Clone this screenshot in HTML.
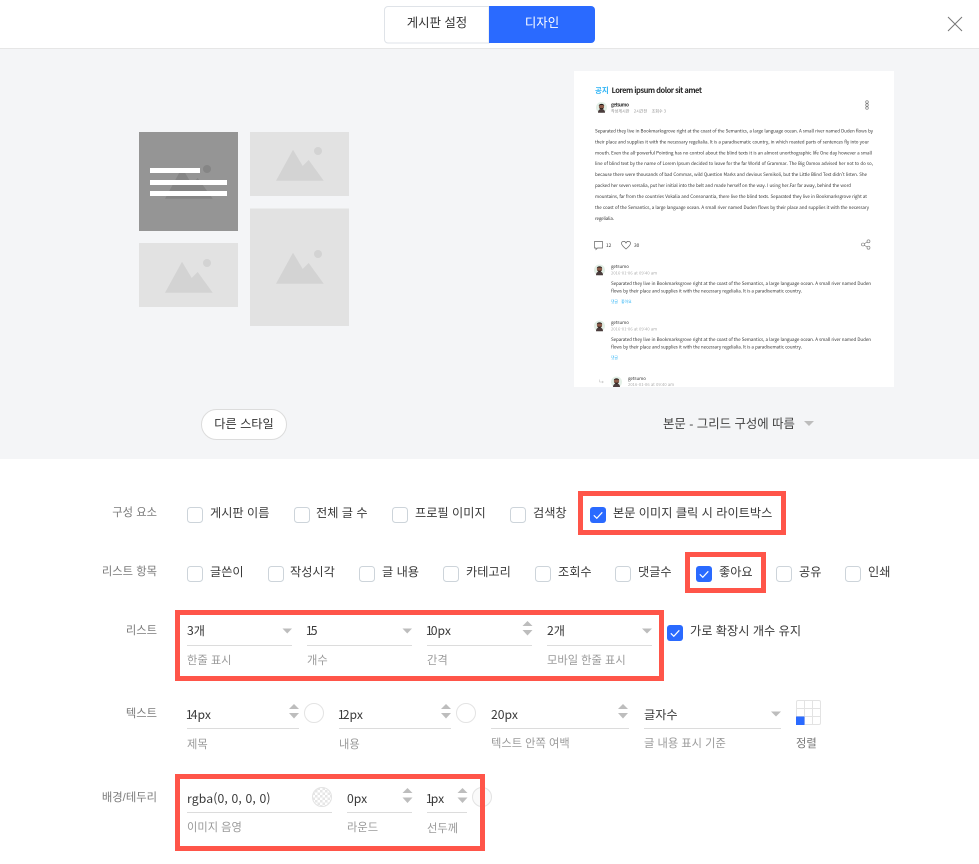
<!DOCTYPE html>
<html lang="ko"><head><meta charset="utf-8"><title>디자인</title>
<style>
html,body{margin:0;padding:0;background:#fff}
body{position:relative;width:979px;height:864px;overflow:hidden;font-family:"Liberation Sans","Noto Sans CJK KR",sans-serif;color:#333}
svg{position:absolute;left:0;top:0}
.t{position:absolute;white-space:nowrap;line-height:20px;font-size:12.2px;color:#3a3a3a}
.l{position:absolute;white-space:nowrap;line-height:20px;font-size:11.3px;color:#7a7a7a;right:822px}
.s{position:absolute;white-space:nowrap;line-height:20px;font-size:11.25px;color:#9a9a9a}
.v{position:absolute;white-space:nowrap;line-height:20px;font-size:12.2px;color:#3a3a3a;font-family:"Noto Sans CJK KR","Liberation Sans",sans-serif}
.n{margin-left:-1.2px;letter-spacing:-1.8px}
.c{position:absolute;text-align:center;line-height:20px;font-size:12.4px}
.pv{font-family:"Noto Sans CJK KR","Liberation Sans",sans-serif;fill:#3a3a3a;font-size:4.5px}
.red{position:absolute;border:5px solid #ff5549;box-sizing:border-box}
</style></head><body>
<svg width="979" height="864" viewBox="0 0 979 864">
<defs>
<pattern id="ck" width="5" height="5" patternUnits="userSpaceOnUse"><rect width="5" height="5" fill="#fff"/><rect width="2.500" height="2.500" fill="#e6e6e6"/><rect x="2.500" y="2.500" width="2.500" height="2.500" fill="#e6e6e6"/></pattern>
<g id="mt"><path d="M43 29.700L52.700 46 58.700 40 73.700 60.700H26Z"/><circle cx="68" cy="31" r="4"/></g>
<g id="av"><circle cx="0" cy="0" r="5.500" fill="#e3efe6"/><path d="M-3.500 5.200C-3.500 2.500-2 1.500 0 1.500S3.500 2.500 3.500 5.200Z" fill="#4a3c3c"/><circle cx="0" cy="-.8" r="2.600" fill="#8a5a48"/><path d="M-2.700-1.500C-2.700-4.300 2.700-4.300 2.700-1.500L1.500-2.500H-1.500Z" fill="#221a18"/><path d="M-2.300.2C-1.500 2.500 1.500 2.500 2.300.2L0 .8Z" fill="#2a1f1c"/></g>
<g id="up"><path d="M-5 5L0 0 5 5Z" fill="#bdbdbd"/></g>
<g id="dn"><path d="M-5 0L0 5.500 5 0Z" fill="#bdbdbd"/></g>
<g id="cb"><rect x=".5" y=".5" width="15" height="15" rx="3" fill="#fff" stroke="#cdd4da"/></g>
<g id="cc"><rect width="16" height="16" rx="3" fill="#2a6aff"/><path d="M3.800 8.300L6.800 11.300 12.300 5.300" fill="none" stroke="#fff" stroke-width="1.200"/></g>
</defs>
<!-- header -->
<rect y="48" width="979" height="1" fill="#e6e6e6"/>
<path d="M489 6.500H388a3.500 3.500 0 0 0-3.500 3.500V39.500a3.500 3.500 0 0 0 3.500 3.500H489Z" fill="#fff" stroke="#dfe3e8"/>
<path d="M489 6H591a4 4 0 0 1 4 4V39a4 4 0 0 1-4 4H489Z" fill="#2a6aff"/>
<path d="M948 17L962 31M962 17L948 31" stroke="#777" stroke-width="1" fill="none"/>
<!-- preview bg -->
<rect y="49" width="979" height="410" fill="#f4f5f7"/>
<!-- tiles -->
<rect x="139" y="132" width="99" height="99" fill="#959595"/>
<use href="#mt" x="139" y="138" fill="#858585"/>
<rect x="150" y="168" width="50" height="5" fill="#fff"/><rect x="150" y="180" width="77" height="5" fill="#fff"/><rect x="150" y="191" width="77" height="5" fill="#fff"/>
<rect x="250" y="132" width="99" height="64" fill="#e2e2e2"/>
<use href="#mt" x="250" y="120" fill="#d3d3d3"/>
<rect x="139" y="243" width="99" height="64" fill="#e2e2e2"/>
<use href="#mt" x="139" y="232" fill="#d3d3d3"/>
<rect x="250" y="208.500" width="99" height="117.500" fill="#e2e2e2"/>
<use href="#mt" x="250" y="223" fill="#d3d3d3"/>
<!-- preview card -->
<rect x="574" y="71" width="320" height="316" fill="#fff"/>
<g style="filter:blur(.25px)">
<text x="595" y="93" style="font-family:'Noto Sans CJK KR',sans-serif;font-size:7.500px;font-weight:700" fill="#2fb4f5">공지</text>
<text x="611.500" y="93" textLength="90.500" style="font-family:'Noto Sans CJK KR',sans-serif;font-size:7.500px;font-weight:700" fill="#2a2a2a">Lorem ipsum dolor sit amet</text>
<use href="#av" x="601.500" y="107.500"/>
<text class="pv" x="611" y="106.500" textLength="18" style="font-size:4.800px;font-weight:700;fill:#333">getsumo</text>
<text class="pv" x="611" y="112.500" style="fill:#888;font-size:4px">작성게시판 &#160;&#160; 2시간전 &#160;&#160; 조회수 3</text>
<circle cx="867" cy="102" r="1.300" fill="none" stroke="#777" stroke-width=".7"/><circle cx="867" cy="105" r="1.300" fill="none" stroke="#777" stroke-width=".7"/><circle cx="867" cy="108" r="1.300" fill="none" stroke="#777" stroke-width=".7"/>
<text class="pv" x="595" y="132.500" textLength="278">Separated they live in Bookmarksgrove right at the coast of the Semantics, a large language ocean. A small river named Duden flows by</text>
<text class="pv" x="595" y="143.500" textLength="274">their place and supplies it with the necessary regelialia. It is a paradisematic country, in which roasted parts of sentences fly into your</text>
<text class="pv" x="595" y="154.500" textLength="277">mouth. Even the all-powerful Pointing has no control about the blind texts it is an almost unorthographic life One day however a small</text>
<text class="pv" x="595" y="165" textLength="278">line of blind text by the name of Lorem Ipsum decided to leave for the far World of Grammar. The Big Oxmox advised her not to do so,</text>
<text class="pv" x="595" y="176" textLength="272">because there were thousands of bad Commas, wild Question Marks and devious Semikoli, but the Little Blind Text didn't listen. She</text>
<text class="pv" x="595" y="187" textLength="256">packed her seven versalia, put her initial into the belt and made herself on the way. I using her.Far far away, behind the word</text>
<text class="pv" x="595" y="197.800" textLength="272">mountains, far from the countries Vokalia and Consonantia, there live the blind texts. Separated they live in Bookmarksgrove right at</text>
<text class="pv" x="595" y="208.800" textLength="274">the coast of the Semantics, a large language ocean. A small river named Duden flows by their place and supplies it with the necessary</text>
<text class="pv" x="595" y="219.800" textLength="19">regelialia.</text>
<path d="M594.500 241.500H602.500V248H597.500L596 249.500V248H594.500Z" fill="none" stroke="#666" stroke-width=".7"/>
<text class="pv" x="606" y="247" style="font-size:4.800px">12</text>
<path d="M626 249C623 246.500 621.500 245 621.500 243.500C621.500 241 625 240.500 626 243C627 240.500 630.500 241 630.500 243.500C630.500 245 629 246.500 626 249Z" fill="none" stroke="#666" stroke-width=".7"/>
<text class="pv" x="634" y="247" style="font-size:4.800px">30</text>
<path d="M863 244.500L868 241.500M863 244.500L868 247.500" stroke="#777" stroke-width=".6"/><circle cx="863" cy="244.500" r="1.500" fill="#fff" stroke="#777" stroke-width=".6"/><circle cx="868.500" cy="241.300" r="1.500" fill="#fff" stroke="#777" stroke-width=".6"/><circle cx="868.500" cy="247.700" r="1.500" fill="#fff" stroke="#777" stroke-width=".6"/>
<use href="#av" x="599.500" y="270"/>
<text class="pv" x="611" y="268" textLength="18" style="font-size:4.500px">getsumo</text>
<text class="pv" x="611" y="274.500" textLength="46" style="fill:#aaa;font-size:4px">2016-01-06 at 09:40 am</text>
<text class="pv" x="611" y="285" textLength="260">Separated they live in Bookmarksgrove right at the coast of the Semantics, a large language ocean. A small river named Duden</text>
<text class="pv" x="611" y="292.400" textLength="191">flows by their place and supplies it with the necessary regelialia. It is a paradisematic country.</text>
<text class="pv" x="611" y="303" style="fill:#2fb4f5;font-size:3.800px">댓글 &#160; 좋아요</text>
<use href="#av" x="599.500" y="326"/>
<text class="pv" x="611" y="324" textLength="18" style="font-size:4.500px">getsumo</text>
<text class="pv" x="611" y="330.500" textLength="46" style="fill:#aaa;font-size:4px">2016-01-06 at 09:40 am</text>
<text class="pv" x="611" y="341" textLength="260">Separated they live in Bookmarksgrove right at the coast of the Semantics, a large language ocean. A small river named Duden</text>
<text class="pv" x="611" y="348.400" textLength="191">flows by their place and supplies it with the necessary regelialia. It is a paradisematic country.</text>
<text class="pv" x="611" y="359" style="fill:#2fb4f5;font-size:3.800px">댓글</text>
<path d="M599.500 379.500V382H603M602 381L603.500 382 602 383" fill="none" stroke="#bbb" stroke-width=".5"/>
<use href="#av" x="616.500" y="382"/>
<text class="pv" x="628" y="380" textLength="18" style="font-size:4.500px">getsumo</text>
<text class="pv" x="628" y="386" textLength="46" style="fill:#aaa;font-size:4px">2016-01-06 at 09:40 am</text>
</g>
<rect x="574" y="387" width="320" height="8" fill="#f4f5f7"/>
<!-- buttons -->
<rect x="201.500" y="409.500" width="85" height="30" rx="15" fill="#fff" stroke="#dcdcdc"/>
<path d="M804 421H814L809 426Z" fill="#bdbdbd"/>
<!-- row 1 checks -->
<use href="#cb" x="187" y="507"/><use href="#cb" x="294" y="507"/><use href="#cb" x="392" y="507"/><use href="#cb" x="510" y="507"/><use href="#cc" x="590" y="507"/>
<!-- row 2 checks -->
<use href="#cb" x="187" y="566"/><use href="#cb" x="268" y="566"/><use href="#cb" x="359" y="566"/><use href="#cb" x="443" y="566"/><use href="#cb" x="535" y="566"/><use href="#cb" x="615" y="566"/><use href="#cc" x="696" y="566"/><use href="#cb" x="776" y="566"/><use href="#cb" x="845" y="566"/>
<use href="#cc" x="667" y="625"/>
<!-- underlines -->
<g fill="#dcdcdc">
<rect x="187" y="645" width="105" height="1"/><rect x="307" y="645" width="105" height="1"/><rect x="427" y="645" width="105" height="1"/><rect x="547" y="645" width="105" height="1"/>
<rect x="187" y="728" width="112" height="1"/><rect x="339" y="728" width="112" height="1"/><rect x="491" y="728" width="138" height="1"/><rect x="644" y="728" width="137" height="1"/>
<rect x="187" y="812" width="145" height="1"/><rect x="347" y="812" width="65" height="1"/><rect x="427" y="812" width="40" height="1"/>
</g>
<!-- arrows -->
<g fill="#bdbdbd">
<path d="M282.500 628.500H292L287.250 633.500Z"/><path d="M402.500 628.500H412L407.250 633.500Z"/><path d="M642 628.500H652L647 633.500Z"/><path d="M771 711.500H781L776 716.500Z"/>
</g>
<use href="#up" x="527.500" y="621"/><use href="#dn" x="527.500" y="630"/>
<use href="#up" x="294" y="704"/><use href="#dn" x="294" y="713"/>
<use href="#up" x="446" y="704"/><use href="#dn" x="446" y="713"/>
<use href="#up" x="623" y="704"/><use href="#dn" x="623" y="713"/>
<use href="#up" x="407.500" y="788"/><use href="#dn" x="407.500" y="797.500"/>
<use href="#up" x="462.500" y="788"/><use href="#dn" x="462.500" y="797.500"/>
<!-- colour circles -->
<circle cx="314" cy="713" r="9.500" fill="#fff" stroke="#e3e3e3"/>
<circle cx="466" cy="713" r="9.500" fill="#fff" stroke="#e3e3e3"/>
<circle cx="322" cy="797" r="9.500" fill="url(#ck)" stroke="#e3e3e3"/>
<circle cx="482" cy="797" r="9.500" fill="#fafafa" stroke="#e3e3e3"/>
<!-- align grid -->
<rect x="796.500" y="700.500" width="24" height="24" rx="1.500" fill="#fff" stroke="#e3e3e3"/>
<path d="M804.500 700.500V724.500M812.500 700.500V724.500M796.500 708.500H820.500M796.500 716.500H820.500" stroke="#e3e3e3" fill="none"/>
<rect x="796" y="716.500" width="8.500" height="8.500" fill="#2a6aff"/>
</svg>

<!-- header text -->
<div class="c" style="left:385px;width:104px;top:13px;color:#333">게시판 설정</div>
<div class="c" style="left:489px;width:106px;top:13px;color:#fff">디자인</div>

<div class="c" style="left:201px;width:86px;top:414px;color:#333;font-size:12.2px">다른 스타일</div>
<div class="t" style="left:663px;top:414px;color:#444;font-size:12.4px">본문 - 그리드 구성에 따름</div>

<!-- labels -->
<div class="l" style="top:503px">구성 요소</div>
<div class="l" style="top:562px">리스트 항목</div>
<div class="l" style="top:621px">리스트</div>
<div class="l" style="top:704px">텍스트</div>
<div class="l" style="top:788px">배경/테두리</div>

<!-- row 1 -->
<div class="t" style="left:210px;top:503px">게시판 이름</div>
<div class="t" style="left:316px;top:503px">전체 글 수</div>
<div class="t" style="left:415px;top:503px">프로필 이미지</div>
<div class="t" style="left:533px;top:503px">검색창</div>
<div class="t" style="left:613px;top:503px">본문 이미지 클릭 시 라이트박스</div>

<!-- row 2 -->
<div class="t" style="left:210px;top:562px">글쓴이</div>
<div class="t" style="left:290px;top:562px">작성시각</div>
<div class="t" style="left:382px;top:562px">글 내용</div>
<div class="t" style="left:466px;top:562px">카테고리</div>
<div class="t" style="left:558px;top:562px">조회수</div>
<div class="t" style="left:638px;top:562px">댓글수</div>
<div class="t" style="left:719px;top:562px">좋아요</div>
<div class="t" style="left:799px;top:562px">공유</div>
<div class="t" style="left:868px;top:562px">인쇄</div>

<!-- row 3 -->
<div class="v" style="left:187px;top:620px">3개</div>
<div class="v" style="left:307px;top:620px"><span class="n">1</span>5</div>
<div class="v" style="left:427px;top:620px"><span class="n">1</span>0px</div>
<div class="v" style="left:547px;top:620px">2개</div>
<div class="t" style="left:690px;top:621px">가로 확장시 개수 유지</div>
<div class="s" style="left:187px;top:651px">한줄 표시</div>
<div class="s" style="left:307px;top:651px">개수</div>
<div class="s" style="left:427px;top:651px">간격</div>
<div class="s" style="left:547px;top:651px">모바일 한줄 표시</div>

<!-- row 4 -->
<div class="v" style="left:187px;top:704px"><span class="n">1</span>4px</div>
<div class="v" style="left:339px;top:704px"><span class="n">1</span>2px</div>
<div class="v" style="left:491px;top:704px">20px</div>
<div class="v" style="left:644px;top:704px">글자수</div>
<div class="s" style="left:187px;top:735px">제목</div>
<div class="s" style="left:339px;top:735px">내용</div>
<div class="s" style="left:491px;top:734px">텍스트 안쪽 여백</div>
<div class="s" style="left:644px;top:734px">글 내용 표시 기준</div>
<div class="s" style="left:796px;top:734px;color:#777">정렬</div>

<!-- row 5 -->
<div class="v" style="left:187px;top:788px;letter-spacing:.14px">rgba(0, 0, 0, 0)</div>
<div class="v" style="left:347px;top:788px">0px</div>
<div class="v" style="left:427px;top:788px"><span class="n">1</span>px</div>
<div class="s" style="left:187px;top:818px">이미지 음영</div>
<div class="s" style="left:347px;top:818px">라운드</div>
<div class="s" style="left:427px;top:819px">선두께</div>

<!-- red highlights -->
<div class="red" style="left:578px;top:491px;width:208px;height:44px"></div>
<div class="red" style="left:685px;top:552px;width:81px;height:41px"></div>
<div class="red" style="left:175px;top:610px;width:489px;height:71px"></div>
<div class="red" style="left:175px;top:774px;width:310px;height:77px"></div>
</body></html>
